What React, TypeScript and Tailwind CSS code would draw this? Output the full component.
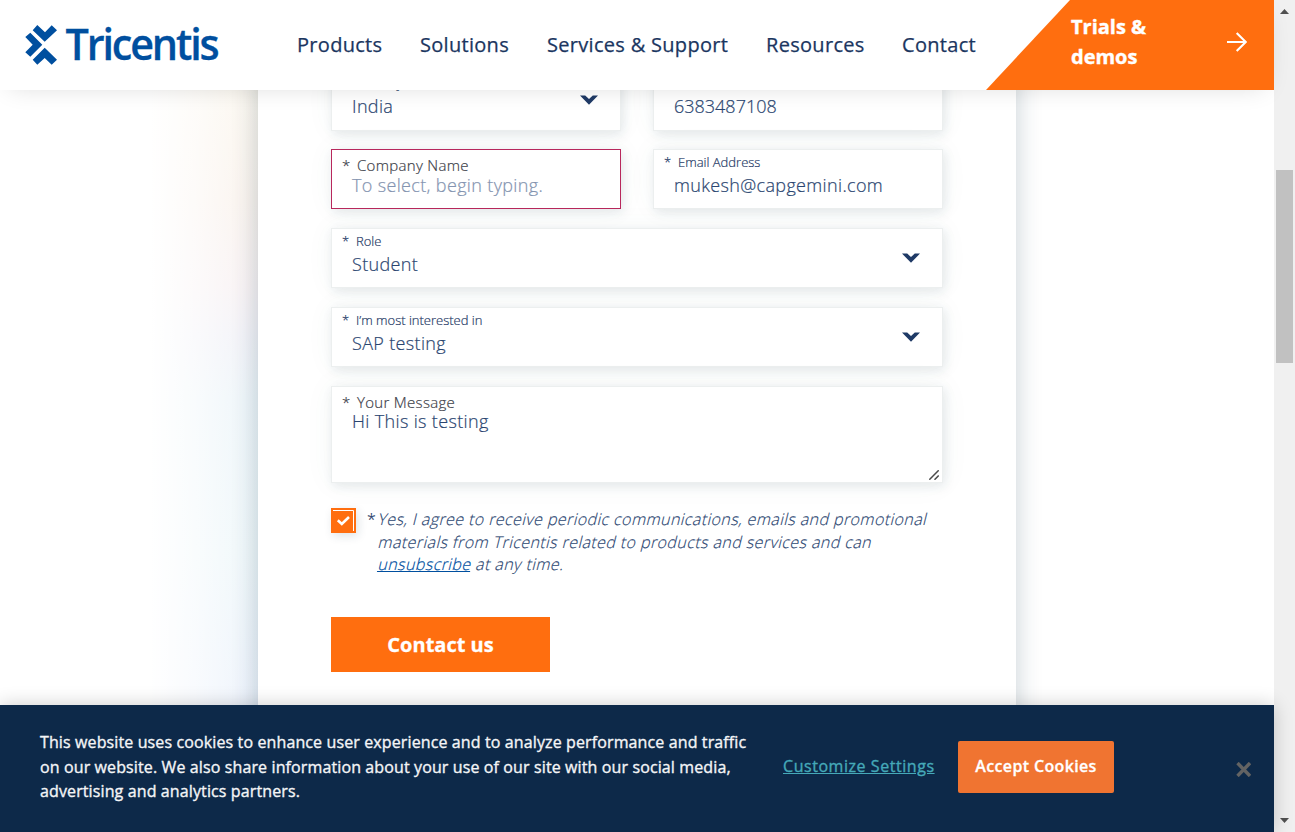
import type { ReactNode } from "react";

const navItems = [
  { label: "Products", cls: "w-[123px]" },
  { label: "Solutions", cls: "w-[127px]" },
  { label: "Services & Support", cls: "w-[219px]" },
  { label: "Resources", cls: "w-[136px]" },
  { label: "Contact", cls: "w-[80px]" },
];

const consentLine = "origin-bottom-left -skew-x-14";

function Logo() {
  return (
    <svg width="200" height="50" viewBox="0 0 200 50" className="block">
      <g fill="#004f9f">
        <path d="M13.3 5 L21 12.3 L27.7 5.3 L33 10.3 L20.7 21.7 L8.7 10.3 Z" />
        <path d="M6.3 12.7 L18.3 24.7 L6.3 36.7 L1.3 32.3 L8.7 24.7 L1.3 17 Z" />
        <path d="M20.7 27.7 L33 39.7 L27.7 44.7 L20.7 38 L13.3 44.7 L8.7 39.7 Z" />
      </g>
      <text
        x="41.5"
        y="40.3"
        fill="#004f9f"
        stroke="#004f9f"
        strokeWidth="0.3"
        fontFamily="'Open Sans', sans-serif"
        fontSize="42.5"
        fontWeight="600"
        letterSpacing="-2.2"
        textLength="152"
        lengthAdjust="spacingAndGlyphs"
      >
        Tricentis
      </text>
    </svg>
  );
}

function Chevron() {
  return (
    <svg width="18" height="10" viewBox="0 0 18 10" className="block">
      <path d="M0 0.6 H5.2 L9 4 L12.8 0.6 H18 L9 9.8 Z" fill="#1f3a66" />
    </svg>
  );
}

type FieldProps = {
  label: string;
  value: string;
  large?: boolean;
  error?: boolean;
  select?: boolean;
  placeholder?: boolean;
  numeric?: boolean;
  className?: string;
  children?: ReactNode;
};

function Field({
  label,
  value,
  large,
  error,
  select,
  placeholder,
  numeric,
  className = "h-[60px]",
  children,
}: FieldProps) {
  return (
    <div
      className={`relative flex justify-between border bg-white shadow-[2px_3px_10px_rgba(30,60,80,0.10),0_0_28px_rgba(60,120,100,0.05)] ${
        error ? "border-[#b8285c]" : "border-[#ecefef]"
      } ${className}`}
    >
      <div className="flex flex-col pt-[3px] pl-[10px]">
        {large ? (
          <div
            className={`flex items-start pt-[2px] text-[15px] leading-5 font-light text-[#3c4048] [-webkit-text-stroke:0.2px_#3c4048] ${
              error ? "h-5" : "h-[19px]"
            }`}
          >
            <span className="w-[15px]">*</span>
            <span className="tracking-[0.3px]">{label}</span>
          </div>
        ) : (
          <div className="flex h-5 text-[13px] leading-[18px] font-light text-[#1f3a66] [-webkit-text-stroke:0.2px_#1f3a66]">
            <span className="w-[14px]">*</span>
            <span>{label}</span>
          </div>
        )}
        <div
          className={`pl-[10px] text-[18px] leading-6 font-light ${numeric ? "" : "tracking-[0.35px]"} ${
            placeholder
              ? "text-[#8494b0] [-webkit-text-stroke:0.2px_#8494b0]"
              : "text-[#2a4570] [-webkit-text-stroke:0.2px_#2a4570]"
          }`}
        >
          {value}
        </div>
      </div>
      {select && (
        <div className="pt-[24px] pr-[22px]">
          <Chevron />
        </div>
      )}
      {children}
    </div>
  );
}

function Header() {
  return (
    <header className="relative z-20 flex h-[90px] shrink-0 bg-white shadow-[0_6px_26px_-10px_rgba(0,0,0,0.16)]">
      <div className="w-[297px] pt-5 pl-6">
        <Logo />
      </div>
      <nav className="flex flex-1 items-center text-[20px] font-medium tracking-[0.3px] text-[#1b365f] [-webkit-text-stroke:0.25px_#1b365f]">
        {navItems.map((n) => (
          <a key={n.label} className={`${n.cls} whitespace-nowrap`}>
            {n.label}
          </a>
        ))}
      </nav>
      <div className="flex w-[288px] bg-[#ff6e0f] pl-[85px] [clip-path:polygon(84px_0,100%_0,100%_100%,0_100%)]">
        <div className="w-[156px] pt-3 text-[20px] leading-[30px] font-bold text-white [-webkit-text-stroke:0.4px_white]">
          Trials &amp;
          <br />
          demos
        </div>
        <svg width="20" height="20" viewBox="0 0 20 20" className="mt-8 block" fill="none" stroke="white" strokeWidth="2.2">
          <path d="M0 10 H18.5 M9.7 1 L18.8 10 L9.7 19" />
        </svg>
      </div>
    </header>
  );
}

function ContactForm() {
  return (
    <div className="-mt-5 h-[680px] w-[758px] bg-white px-[73px] shadow-[0_0_24px_rgba(20,60,80,0.24)]">
      <div className="flex flex-col gap-[19px]">
        <div className="grid grid-cols-2 gap-8">
          <Field label="Country" value="India" select className="h-[61px]" />
          <Field label="Phone" value="6383487108" numeric className="h-[61px]" />
        </div>
        <div className="-mt-px grid grid-cols-2 gap-8">
          <Field label="Company Name" value="To select, begin typing." large error placeholder />
          <Field label="Email Address" value="mukesh@capgemini.com" />
        </div>
        <Field label="Role" value="Student" select />
        <Field label="I’m most interested in" value="SAP testing" select />
        <Field label="Your Message" value="Hi This is testing" large className="h-[97px]">
          <svg
            width="10"
            height="10"
            viewBox="0 0 10 10"
            className="mt-[83px] mr-[3px] block"
            stroke="#4a4a4a"
            strokeWidth="1.5"
          >
            <path d="M0.3 9.7 L9.7 0.3 M5.5 9.7 L9.7 5.5" />
          </svg>
        </Field>
      </div>
      <div className="mt-[25px] flex">
        <div className="size-[25px] shrink-0 bg-[#ff6e0f] shadow-[2px_3px_10px_rgba(30,60,80,0.14)]">
          <svg width="25" height="25" viewBox="0 0 25 25" fill="none" stroke="white">
            <path d="M2 2.5 H22.5 V23" strokeWidth="1" />
            <path d="M6.8 12.3 L10.8 16 L18 9" strokeWidth="2.6" />
          </svg>
        </div>
        <span className="w-[20px] pl-[11px] text-[16px] leading-[22.5px] font-light text-[#1f3a66] [-webkit-text-stroke:0.2px_#1f3a66]">
          *
        </span>
        <p className="flex flex-col text-[16px] leading-[22.5px] font-light tracking-[0.42px] whitespace-nowrap text-[#2a4570] [-webkit-text-stroke:0.15px_#2a4570]">
          <span className={consentLine}>
            Yes, I agree to receive periodic communications, emails and promotional
          </span>
          <span className={consentLine}>
            materials from Tricentis related to products and services and can
          </span>
          <span className={consentLine}>
            <a className="text-[#004f9f] underline [-webkit-text-stroke:0.2px_#004f9f]">unsubscribe</a> at any time.
          </span>
        </p>
      </div>
      <button className="mt-[41px] block h-[55px] w-[219px] bg-[#ff6e0f] pt-px text-[20px] font-bold text-white [-webkit-text-stroke:0.3px_white]">
        Contact us
      </button>
    </div>
  );
}

function CookieBanner() {
  return (
    <footer className="relative z-20 flex h-[127px] shrink-0 bg-[#0d2949] shadow-[0_0_18px_rgba(0,0,0,0.2)]">
      <p className="w-[742px] pt-[25px] pl-10 text-[16px] leading-[24.5px] font-medium tracking-[0.12px] whitespace-nowrap text-[#f4f5f7] [-webkit-text-stroke:0.35px_#f4f5f7]">
        This website uses cookies to enhance user experience and to analyze performance and traffic
        <br />
        on our website. We also share information about your use of our site with our social media,
        <br />
        advertising and analytics partners.
      </p>
      <a className="mt-[49px] w-[216px] shrink-0 pl-[41px] text-[16px] leading-6 font-medium tracking-[0.55px] whitespace-nowrap text-[#45a9b9] underline [-webkit-text-stroke:0.35px_#45a9b9]">
        Customize Settings
      </a>
      <button className="mt-9 h-[52px] w-[156px] shrink-0 rounded-[2px] bg-[#f07431] pb-[2px] text-[16px] font-semibold tracking-[0.35px] text-white [-webkit-text-stroke:0.3px_white]">
        Accept Cookies
      </button>
      <svg width="15" height="15" viewBox="0 0 15 15" className="mt-[57px] ml-[122px] block" stroke="#636363" strokeWidth="3.4">
        <path d="M1.5 1 L14 14 M14 1 L1.5 14" />
      </svg>
    </footer>
  );
}

function Scrollbar() {
  return (
    <div className="flex h-full w-[21px] shrink-0 flex-col items-center bg-[#f0f0f0]">
      <svg width="9" height="5" viewBox="0 0 9 5" className="mt-[9px] block">
        <path d="M0 5 L4.5 0 L9 5 Z" fill="#505050" />
      </svg>
      <div className="mt-[156px] h-[193px] w-[17px] bg-[#c1c1c1]" />
      <svg width="9" height="5" viewBox="0 0 9 5" className="mt-auto mb-[9px] block">
        <path d="M0 0 L4.5 5 L9 0 Z" fill="#505050" />
      </svg>
    </div>
  );
}

export default function App() {
  return (
    <div className="flex h-[832px] w-[1295px] overflow-hidden bg-white font-['Open_Sans',sans-serif]">
      <div className="flex w-[1274px] flex-col">
        <Header />
        <main className="flex flex-1 overflow-hidden">
          <div className="w-[258px] shrink-0 bg-[linear-gradient(to_right,#ffffff_58%,rgba(255,255,255,0.75)_76%,rgba(255,255,255,0.3)_100%),linear-gradient(to_bottom,#faf4e8_0%,#f8eee6_18%,#f5ecee_32%,#ececf4_40%,#e6f1f7_50%,#e8f4f8_75%,#e6eefb_100%)]" />
          <ContactForm />
        </main>
        <CookieBanner />
      </div>
      <Scrollbar />
    </div>
  );
}
